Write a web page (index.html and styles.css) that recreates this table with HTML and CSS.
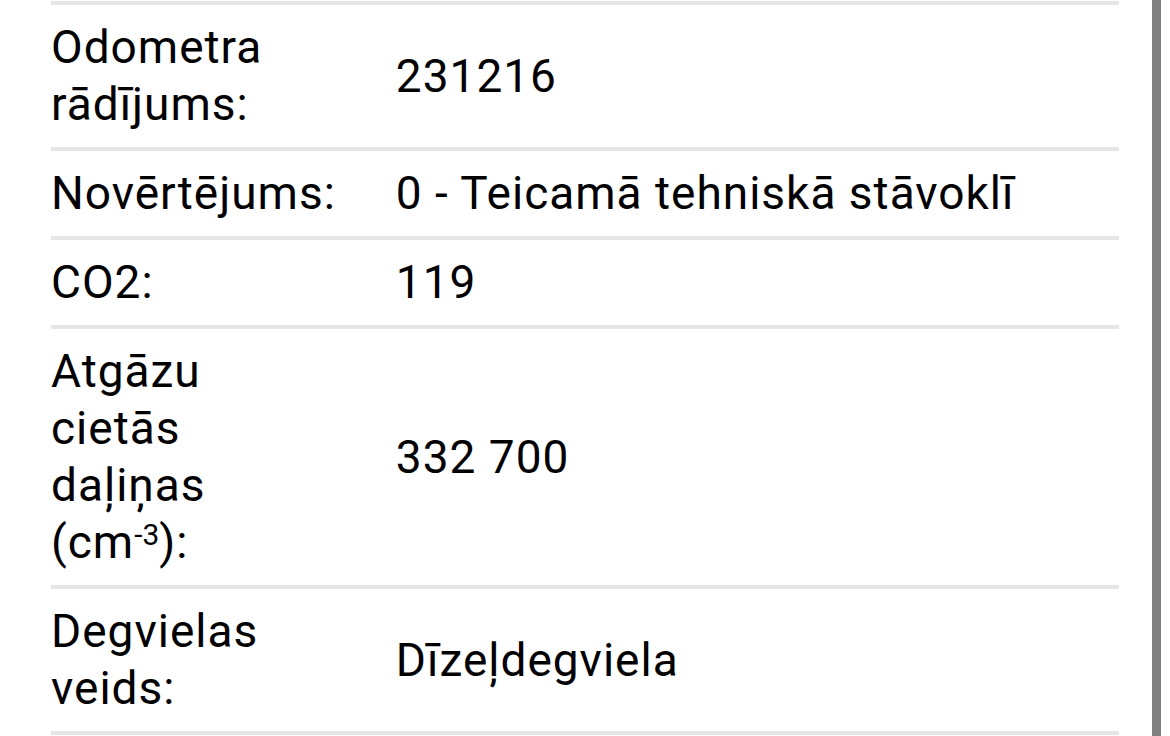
FILE: index.html
```html
<!DOCTYPE html>
<html lang="lv">
<head>
<meta charset="utf-8">
<title>Tehniskā apskate</title>
<link rel="stylesheet" href="styles.css">
</head>
<body>
<div class="page">
  <div class="content">
    <table class="details">
      <tr>
        <td class="label">Odometra rādījums:</td>
        <td class="value">231216</td>
      </tr>
      <tr>
        <td class="label">Novērtējums:</td>
        <td class="value">0 - Teicamā tehniskā stāvoklī</td>
      </tr>
      <tr>
        <td class="label">CO2:</td>
        <td class="value">119</td>
      </tr>
      <tr>
        <td class="label">Atgāzu cietās daļiņas <span class="unit">(cm<sup>-3</sup>):</span></td>
        <td class="value">332 700</td>
      </tr>
      <tr>
        <td class="label">Degvielas veids:</td>
        <td class="value">Dīzeļdegviela</td>
      </tr>
    </table>
  </div>
  <div class="scrollbar"></div>
</div>
</body>
</html>
```
FILE: styles.css
```css
html, body {
  margin: 0;
  padding: 0;
  background: #ffffff;
}

.page {
  display: flex;
  height: 736px;
  overflow: hidden;
}

.content {
  margin-left: 51px;
  width: 1068px;
  padding-top: 1px;
}

.details {
  width: 100%;
  border-collapse: collapse;
  font-family: Roboto, "Noto Sans", sans-serif;
  font-size: 46px;
  letter-spacing: 1px;
  line-height: 57px;
  color: #000000;
  border-top: 4px solid #e6e6e6;
}

.details tr {
  border-bottom: 4px solid #e6e6e6;
}

.details td {
  padding: 14px 0;
  vertical-align: middle;
}

.label {
  width: 1%;
  padding-right: 60px !important;
}

.unit {
  white-space: nowrap;
}

.details sup {
  font-size: 0.65em;
  letter-spacing: 0;
  line-height: 0;
  vertical-align: 0.42em;
}

.scrollbar {
  margin-left: 33px;
  width: 9px;
  height: 736px;
  background: #808080;
}
```
